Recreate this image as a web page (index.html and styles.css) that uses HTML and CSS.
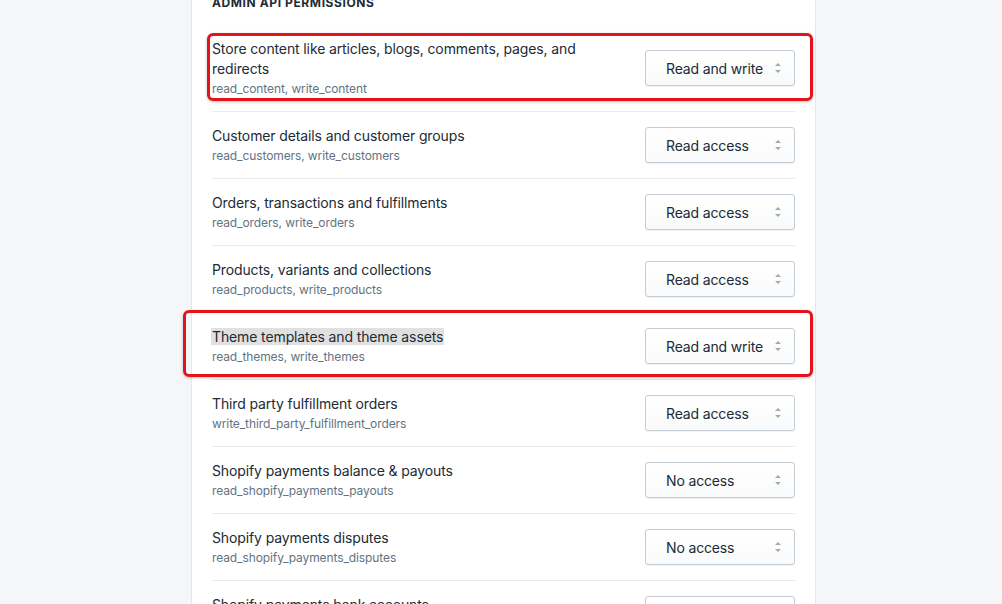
FILE: index.html
```html
<!DOCTYPE html>
<html>
<head>
    <title>Admin API permissions</title>
    <link rel="stylesheet" href="styles.css">
</head>
<body>
    <div class="card">
        <h3 class="subheading">Admin API permissions</h3>
        <ul class="perm-list">
            <li class="perm">
                <div class="perm-text">
                    <div class="perm-title">Store content like articles, blogs, comments, pages, and redirects</div>
                    <div class="perm-scope">read_content, write_content</div>
                </div>
                <div class="select"><span>Read and write</span><svg class="select-arrow" viewBox="0 0 20 20"><path d="M13 8l-3-3-3 3h6zm-.1 4L10 15l-2.9-3h5.8z"/></svg></div>
            </li>
            <li class="perm">
                <div class="perm-text">
                    <div class="perm-title">Customer details and customer groups</div>
                    <div class="perm-scope">read_customers, write_customers</div>
                </div>
                <div class="select"><span>Read access</span><svg class="select-arrow" viewBox="0 0 20 20"><path d="M13 8l-3-3-3 3h6zm-.1 4L10 15l-2.9-3h5.8z"/></svg></div>
            </li>
            <li class="perm">
                <div class="perm-text">
                    <div class="perm-title">Orders, transactions and fulfillments</div>
                    <div class="perm-scope">read_orders, write_orders</div>
                </div>
                <div class="select"><span>Read access</span><svg class="select-arrow" viewBox="0 0 20 20"><path d="M13 8l-3-3-3 3h6zm-.1 4L10 15l-2.9-3h5.8z"/></svg></div>
            </li>
            <li class="perm">
                <div class="perm-text">
                    <div class="perm-title">Products, variants and collections</div>
                    <div class="perm-scope">read_products, write_products</div>
                </div>
                <div class="select"><span>Read access</span><svg class="select-arrow" viewBox="0 0 20 20"><path d="M13 8l-3-3-3 3h6zm-.1 4L10 15l-2.9-3h5.8z"/></svg></div>
            </li>
            <li class="perm">
                <div class="perm-text">
                    <div class="perm-title"><span class="selected">Theme templates and theme assets</span></div>
                    <div class="perm-scope">read_themes, write_themes</div>
                </div>
                <div class="select"><span>Read and write</span><svg class="select-arrow" viewBox="0 0 20 20"><path d="M13 8l-3-3-3 3h6zm-.1 4L10 15l-2.9-3h5.8z"/></svg></div>
            </li>
            <li class="perm">
                <div class="perm-text">
                    <div class="perm-title">Third party fulfillment orders</div>
                    <div class="perm-scope">write_third_party_fulfillment_orders</div>
                </div>
                <div class="select"><span>Read access</span><svg class="select-arrow" viewBox="0 0 20 20"><path d="M13 8l-3-3-3 3h6zm-.1 4L10 15l-2.9-3h5.8z"/></svg></div>
            </li>
            <li class="perm">
                <div class="perm-text">
                    <div class="perm-title">Shopify payments balance &amp; payouts</div>
                    <div class="perm-scope">read_shopify_payments_payouts</div>
                </div>
                <div class="select"><span>No access</span><svg class="select-arrow" viewBox="0 0 20 20"><path d="M13 8l-3-3-3 3h6zm-.1 4L10 15l-2.9-3h5.8z"/></svg></div>
            </li>
            <li class="perm">
                <div class="perm-text">
                    <div class="perm-title">Shopify payments disputes</div>
                    <div class="perm-scope">read_shopify_payments_disputes</div>
                </div>
                <div class="select"><span>No access</span><svg class="select-arrow" viewBox="0 0 20 20"><path d="M13 8l-3-3-3 3h6zm-.1 4L10 15l-2.9-3h5.8z"/></svg></div>
            </li>
            <li class="perm">
                <div class="perm-text">
                    <div class="perm-title">Shopify payments bank accounts</div>
                    <div class="perm-scope">read_shopify_payments_accounts</div>
                </div>
                <div class="select"><span>No access</span><svg class="select-arrow" viewBox="0 0 20 20"><path d="M13 8l-3-3-3 3h6zm-.1 4L10 15l-2.9-3h5.8z"/></svg></div>
            </li>
        </ul>
    </div>

    <!-- annotation boxes drawn over the screenshot -->
    <div class="mark mark-content"></div>
    <div class="mark mark-themes"></div>
</body>
</html>
```

FILE: styles.css
```css
* {
    margin: 0;
    padding: 0;
    box-sizing: border-box;
}

body {
    background: #f4f6f8;
    font-family: Inter, "Noto Sans", sans-serif;
    color: #212b36;
    height: 604px;
    overflow: hidden;
    position: relative;
}

.card {
    width: 625px;
    margin-left: 191px;
    margin-top: -5px;
    background: #fff;
    border-left: 1px solid #e3e6ea;
    border-right: 1px solid #e3e6ea;
    padding: 0 20px;
    min-height: 700px;
}

.subheading {
    font-size: 12px;
    line-height: 16px;
    font-weight: 700;
    text-transform: uppercase;
    letter-spacing: 0.6px;
    color: #212b36;
    margin-bottom: 14px;
}

.perm-list {
    list-style: none;
}

.perm {
    display: flex;
    align-items: center;
    justify-content: space-between;
    padding: 13px 0;
    border-bottom: 1px solid #e8ebee;
}

.perm-text {
    width: 400px;
    padding-top: 1px;
    margin-bottom: -1px;
}

.perm-title {
    font-size: 14px;
    line-height: 20px;
    letter-spacing: -0.12px;
    color: #212b36;
}

.selected {
    background: #e0e0e0;
    padding: 0 1px;
    margin-left: -1px;
}

.perm-scope {
    font-size: 12px;
    line-height: 20px;
    letter-spacing: -0.1px;
    color: #637381;
}

.select {
    width: 150px;
    height: 36px;
    display: flex;
    align-items: center;
    justify-content: space-between;
    padding: 0 6px 0 20px;
    border: 1px solid #c4cdd5;
    border-radius: 3px;
    background: linear-gradient(#fff, #f9fafb);
    box-shadow: 0 1px 0 rgba(22, 29, 37, 0.05);
    font-size: 14px;
    letter-spacing: -0.15px;
    color: #212b36;
}

.select-arrow {
    width: 20px;
    height: 20px;
    fill: #a0a8b1;
}

.mark {
    position: absolute;
    border: 3px solid #e3131b;
    border-radius: 6px;
    box-shadow: 0 1px 3px rgba(0, 0, 0, 0.25);
}

.mark-content {
    left: 207px;
    top: 33px;
    width: 606px;
    height: 68px;
}

.mark-themes {
    left: 183px;
    top: 310px;
    width: 630px;
    height: 67px;
}
```
